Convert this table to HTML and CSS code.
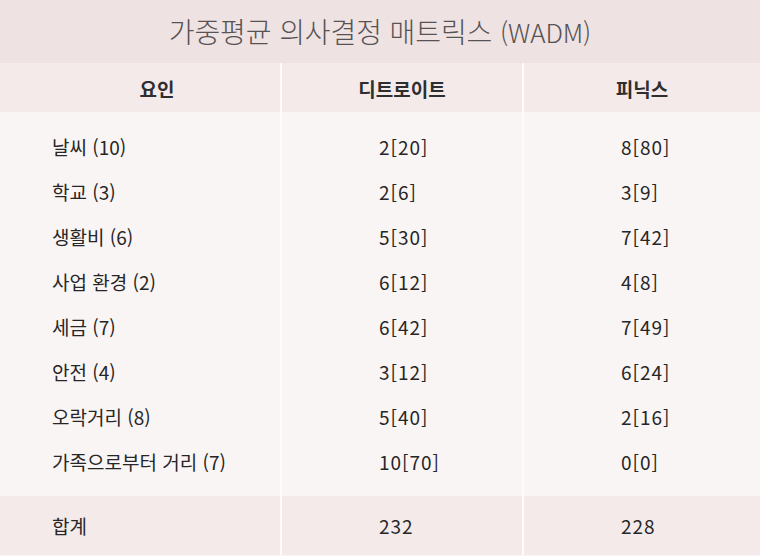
FILE: index.html
```html
<!DOCTYPE html>
<html lang="ko">
<head>
<meta charset="utf-8">
<link rel="stylesheet" href="styles.css">
</head>
<body>
<div class="page">
  <div class="title"><span class="title-text">가중평균 의사결정 매트릭스 <span class="abbr">(WADM)</span></span></div>
  <div class="grid thead">
    <div class="cell c1">요인</div>
    <div class="cell c2">디트로이트</div>
    <div class="cell c3">피닉스</div>
  </div>
  <div class="grid tbody">
    <div class="cell c1">날씨 (10)</div><div class="cell num">2[20]</div><div class="cell num">8[80]</div>
    <div class="cell c1">학교 (3)</div><div class="cell num">2[6]</div><div class="cell num">3[9]</div>
    <div class="cell c1">생활비 (6)</div><div class="cell num">5[30]</div><div class="cell num">7[42]</div>
    <div class="cell c1">사업 환경 (2)</div><div class="cell num">6[12]</div><div class="cell num">4[8]</div>
    <div class="cell c1">세금 (7)</div><div class="cell num">6[42]</div><div class="cell num">7[49]</div>
    <div class="cell c1">안전 (4)</div><div class="cell num">3[12]</div><div class="cell num">6[24]</div>
    <div class="cell c1">오락거리 (8)</div><div class="cell num">5[40]</div><div class="cell num">2[16]</div>
    <div class="cell c1">가족으로부터 거리 (7)</div><div class="cell num">10[70]</div><div class="cell num">0[0]</div>
  </div>
  <div class="grid tfoot">
    <div class="cell c1">합계</div><div class="cell num">232</div><div class="cell num">228</div>
  </div>
</div>
</body>
</html>
```

FILE: styles.css
```css
* { box-sizing: border-box; }
html, body { margin: 0; padding: 0; }
body {
  width: 760px;
  height: 556px;
  overflow: hidden;
  background: #faf5f5;
  font-family: "Noto Sans CJK KR", "Noto Sans", sans-serif;
  color: #262626;
}
.page { width: 760px; }
.title {
  height: 63px;
  background: #eee2e2;
  display: flex;
  align-items: center;
  justify-content: center;
  padding-bottom: 1px;
}
.title-text {
  font-size: 28px;
  font-weight: 300;
  color: #575253;
  letter-spacing: -0.1px;
}
.abbr { font-size: 26px; }
.grid {
  display: grid;
  grid-template-columns: 280px 240px 236px;
  column-gap: 2px;
  background: #fdfbfb;
}
.cell {
  display: flex;
  align-items: center;
}
.thead .cell {
  height: 49px;
  background: #f4eaea;
  justify-content: center;
  font-size: 19px;
  font-weight: 700;
  color: #2e2e2e;
  padding-top: 2px;
}
.thead .c1 { padding-right: 18px; }
.tbody .cell {
  height: 45px;
  background: #faf5f5;
  font-size: 19px;
  font-weight: 400;
}
.tbody .cell:nth-child(-n+3) { height: 57px; padding-top: 11px; }
.tbody .cell:nth-last-child(-n+3) { height: 57px; padding-bottom: 13px; }
.c1 { padding-left: 52px; }
.num { padding-left: 97px; letter-spacing: 1px; }
.tfoot .cell {
  height: 59px;
  background: #f4eaea;
  font-size: 19px;
  font-weight: 400;
}
```
